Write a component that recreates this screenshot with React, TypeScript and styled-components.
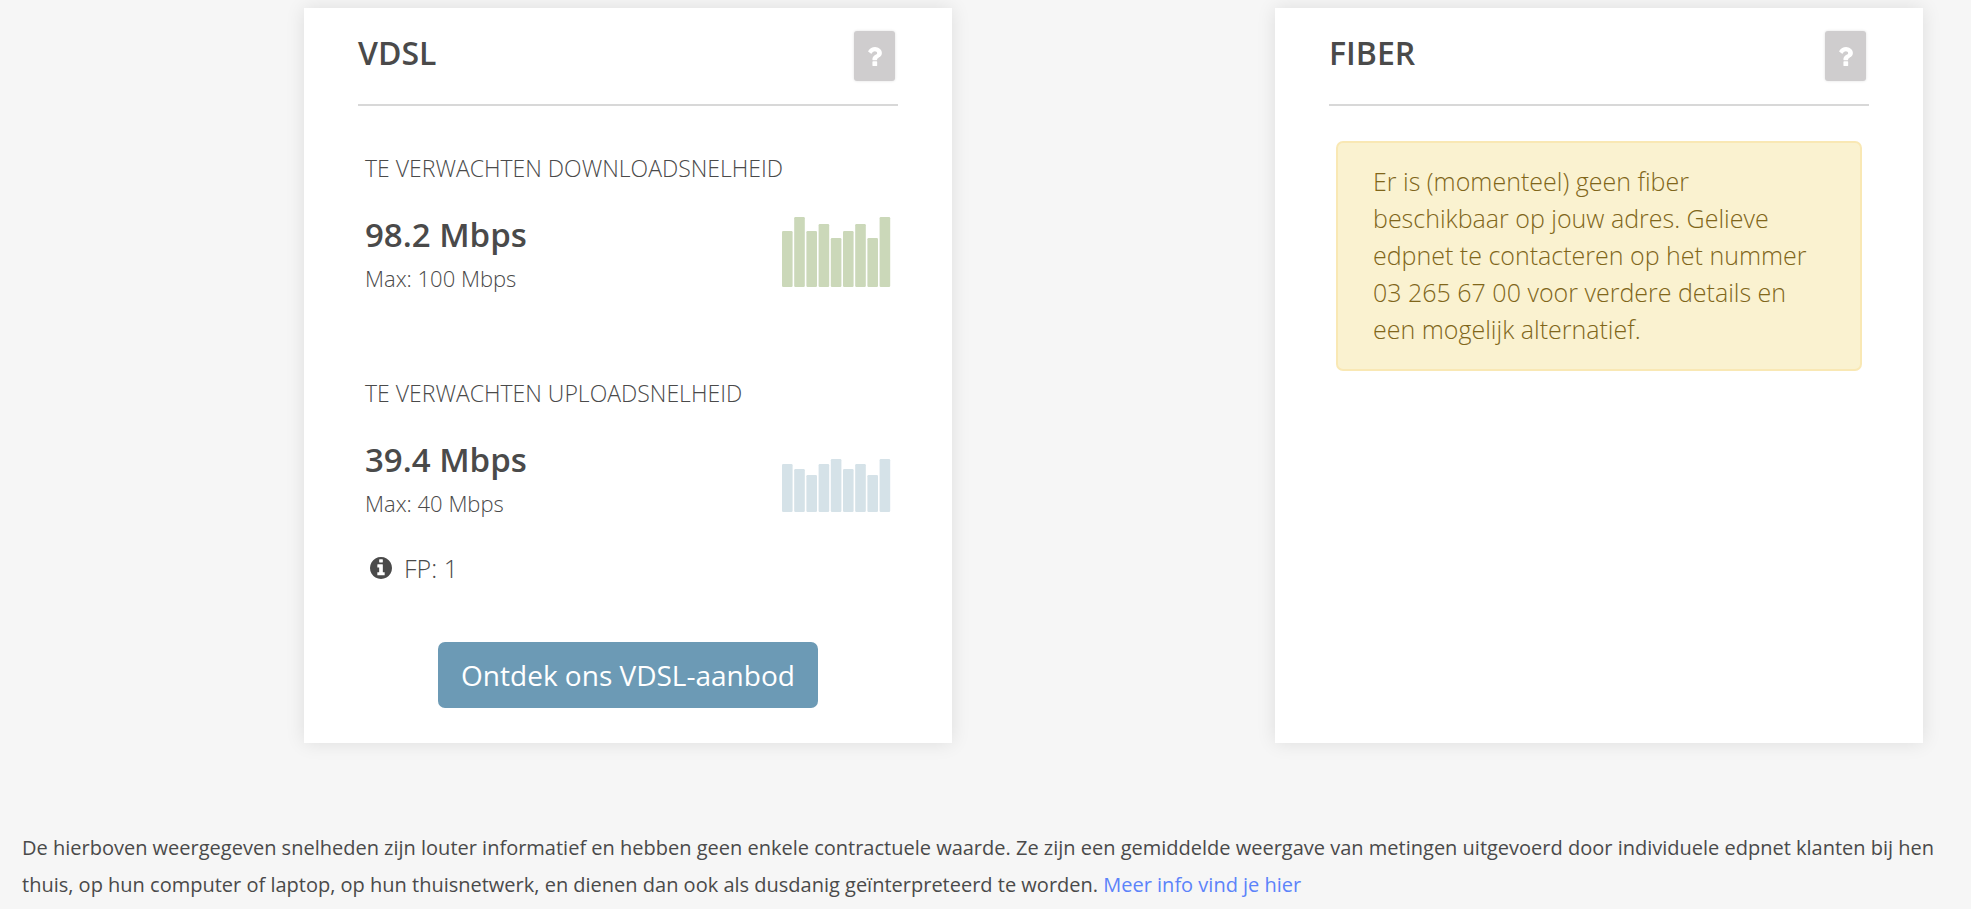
import React from "react";
import styled, { createGlobalStyle } from "styled-components";

const GlobalStyle = createGlobalStyle`
  *, *::before, *::after { box-sizing: border-box; }
  body {
    margin: 0;
    background: #f6f6f6;
    color: #4a4a4a;
    font-family: "Open Sans", "Noto Sans", sans-serif;
    font-size: 22px;
    font-weight: 300;
    line-height: 36px;
  }
  h2, h3, p { margin: 0; font-weight: inherit; }
`;

const Page = styled.main`
  padding-top: 8px;
`;

const Offers = styled.div`
  display: grid;
  grid-template-columns: 304fr 648fr 323fr 648fr 48fr;
`;

const Card = styled.section<{ $column: number }>`
  grid-column: ${(p) => p.$column};
  padding: 23px 54px 35px;
  background: #fff;
  box-shadow: 0 0 18px rgba(0, 0, 0, 0.1);
`;

const CardHeader = styled.header`
  display: flex;
  justify-content: space-between;
  align-items: flex-start;
  padding: 0 3px 23px 0;
  border-bottom: 2px solid #d8d8d8;
`;

const Title = styled.h2`
  font-size: 32px;
  font-weight: 600;
  line-height: 44px;
`;

const HelpButton = styled.button`
  display: flex;
  align-items: center;
  justify-content: center;
  width: 41px;
  height: 50px;
  padding: 0;
  border: 0;
  border-radius: 3px;
  background: #cfcdce;
  box-shadow: 0 0 3px rgba(0, 0, 0, 0.12);
  color: #fff;
`;

const Speeds = styled.div`
  display: flex;
  flex-direction: column;
  gap: 78px;
  padding: 44px 7px 0;
`;

const Label = styled.h3`
  font-size: 23px;
  text-transform: uppercase;
`;

const Reading = styled.div`
  display: flex;
  justify-content: space-between;
  align-items: flex-end;
  margin-top: 25px;
`;

const Value = styled.p`
  font-size: 33px;
  font-weight: 600;
  line-height: 48px;
`;

const Maximum = styled.p`
  line-height: 38px;
`;

const Chart = styled.svg`
  display: block;
  margin-bottom: 10px;
`;

const Note = styled.p`
  display: flex;
  align-items: center;
  gap: 12px;
  margin-top: 28px;
  padding-left: 12px;
  font-size: 25px;
`;

const OfferButton = styled.button`
  display: block;
  height: 66px;
  margin: 56px auto 0;
  padding: 0 23px;
  border: 0;
  border-radius: 7px;
  background: #6c9ab5;
  color: #fff;
  font-family: inherit;
  font-size: 28px;
  font-weight: 400;
`;

const Alert = styled.p`
  margin: 35px 7px 0;
  padding: 20px 35px 21px;
  border: 2px solid #f9e8b4;
  border-radius: 7px;
  background: #faf2d0;
  color: #80661a;
  font-size: 25px;
  line-height: 37px;
`;

const Disclaimer = styled.p`
  padding: 86px 18px 0 22px;
  font-size: 20px;
  font-weight: 400;
  line-height: 37px;
`;

const InfoLink = styled.a`
  color: #5c83fa;
  text-decoration: none;
`;

type SpeedProps = {
  label: string;
  value: string;
  max: string;
  color: string;
  bars: number[];
};

const BAR_STEP = 12.2;

function QuestionIcon() {
  return (
    <svg width="14" height="19" viewBox="95 256 925 1280" fill="currentColor" aria-hidden="true">
      <path d="M704 1256v240q0 16-12 28t-28 12H424q-16 0-28-12t-12-28v-240q0-16 12-28t28-12h240q16 0 28 12t12 28zm316-600q0 54-15.500 101t-35 76.500-55 59.500-57.500 43.500-61 35.500q-41 23-68.500 65t-27.500 67q0 17-12 32.500T660 1152H420q-15 0-25.500-18.500T384 1096v-45q0-83 65-156.500T592 786q59-27 84-56t25-76q0-42-46.500-74T547 548q-65 0-108 29-35 25-107 115-13 16-31 16-12 0-25-8L112 575q-13-10-15.500-25t5.500-28q160-266 464-266 80 0 161 31t146 83 106 127.500 41 158.500z" />
    </svg>
  );
}

function InfoIcon() {
  return (
    <svg width="22" height="22" viewBox="0 128 1536 1536" fill="currentColor" aria-hidden="true">
      <path d="M1024 1376v-160q0-14-9-23t-23-9h-96V672q0-14-9-23t-23-9H544q-14 0-23 9t-9 23v160q0 14 9 23t23 9h96v320h-96q-14 0-23 9t-9 23v160q0 14 9 23t23 9h448q14 0 23-9t9-23zM896 480V320q0-14-9-23t-23-9H672q-14 0-23 9t-9 23v160q0 14 9 23t23 9h192q14 0 23-9t9-23zm640 416q0 209-103 385.500T1153.500 1561 768 1664t-385.500-103T103 1281.500 0 896t103-385.500T382.500 231 768 128t385.500 103T1433 510.500 1536 896z" />
    </svg>
  );
}

function BarChart({ bars, color }: { bars: number[]; color: string }) {
  const height = Math.max(...bars);
  return (
    <Chart width="109" height={height} viewBox={`0 0 109 ${height}`} aria-hidden="true">
      {bars.map((bar, i) => (
        <rect
          key={i}
          x={i * BAR_STEP}
          y={height - bar}
          width="10.6"
          height={bar}
          rx="1.2"
          fill={color}
        />
      ))}
    </Chart>
  );
}

function Speed({ label, value, max, color, bars }: SpeedProps) {
  return (
    <div>
      <Label>{label}</Label>
      <Reading>
        <div>
          <Value>{value}</Value>
          <Maximum>{max}</Maximum>
        </div>
        <BarChart bars={bars} color={color} />
      </Reading>
    </div>
  );
}

function Header({ title }: { title: string }) {
  return (
    <CardHeader>
      <Title>{title}</Title>
      <HelpButton type="button" aria-label={`Help ${title}`}>
        <QuestionIcon />
      </HelpButton>
    </CardHeader>
  );
}

export default function App() {
  return (
    <>
      <GlobalStyle />
      <Page>
        <Offers>
          <Card $column={2}>
            <Header title="VDSL" />
            <Speeds>
              <Speed
                label="Te verwachten downloadsnelheid"
                value="98.2 Mbps"
                max="Max: 100 Mbps"
                color="#cbd8b9"
                bars={[56, 70, 56, 63, 49, 56, 63, 49, 70]}
              />
              <Speed
                label="Te verwachten uploadsnelheid"
                value="39.4 Mbps"
                max="Max: 40 Mbps"
                color="#d5e2e8"
                bars={[48, 43, 37, 48, 53, 43, 48, 37, 53]}
              />
            </Speeds>
            <Note>
              <InfoIcon />
              FP: 1
            </Note>
            <OfferButton type="button">Ontdek ons VDSL-aanbod</OfferButton>
          </Card>
          <Card $column={4}>
            <Header title="FIBER" />
            <Alert>
              Er is (momenteel) geen fiber beschikbaar op jouw adres. Gelieve edpnet te
              contacteren op het nummer 03 265 67 00 voor verdere details en een mogelijk
              alternatief.
            </Alert>
          </Card>
        </Offers>
        <Disclaimer>
          De hierboven weergegeven snelheden zijn louter informatief en hebben geen enkele
          contractuele waarde. Ze zijn een gemiddelde weergave van metingen uitgevoerd door
          individuele edpnet klanten bij hen thuis, op hun computer of laptop, op hun
          thuisnetwerk, en dienen dan ook als dusdanig geïnterpreteerd te worden.{" "}
          <InfoLink href="#meer-info">Meer info vind je hier</InfoLink>
        </Disclaimer>
      </Page>
    </>
  );
}
